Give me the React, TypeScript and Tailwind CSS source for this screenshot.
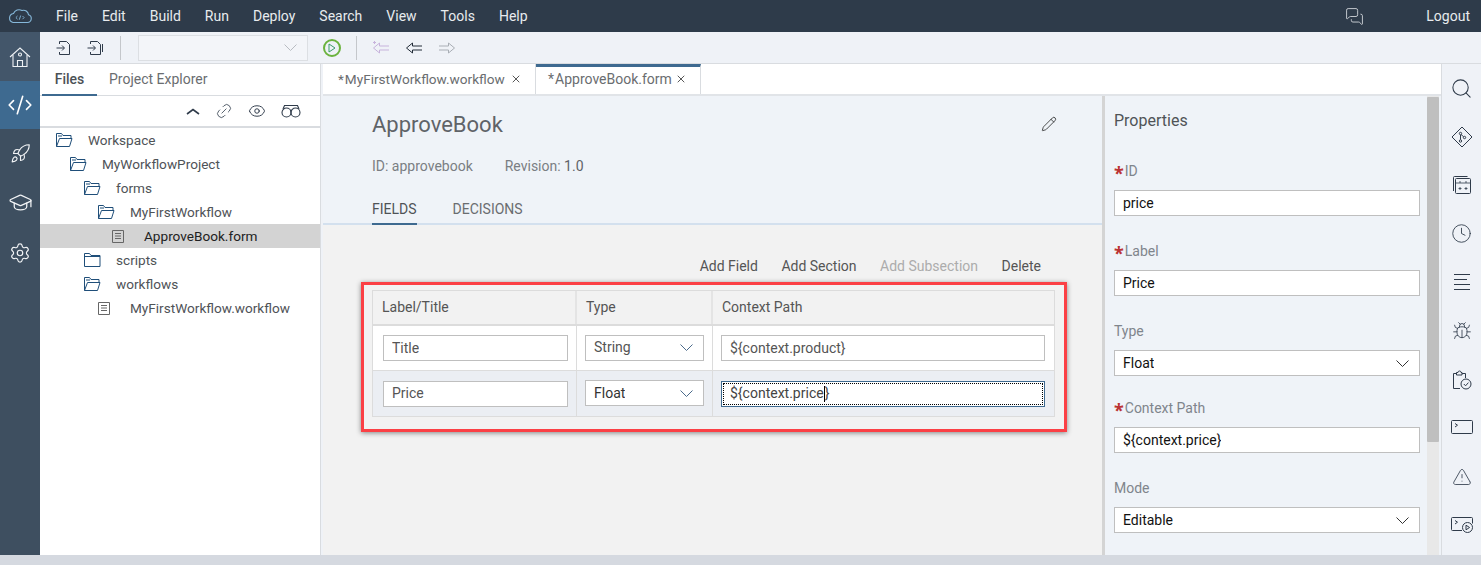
import { ReactNode } from 'react';
import {
  Bug,
  Clock,
  CodeXml,
  Eye,
  GraduationCap,
  Link2,
  MessagesSquare,
  Pencil,
  Rocket,
  Search,
  Settings,
  TriangleAlert,
  X,
} from 'lucide-react';

const menus = ['File', 'Edit', 'Build', 'Run', 'Deploy', 'Search', 'View', 'Tools', 'Help'];

const tree = [
  { name: 'Workspace', icon: 'open', pad: 'pl-[16px]' },
  { name: 'MyWorkflowProject', icon: 'open', pad: 'pl-[30px]' },
  { name: 'forms', icon: 'open', pad: 'pl-[44px]' },
  { name: 'MyFirstWorkflow', icon: 'open', pad: 'pl-[58px]' },
  { name: 'ApproveBook.form', icon: 'file', pad: 'pl-[72px]', selected: true },
  { name: 'scripts', icon: 'closed', pad: 'pl-[44px]' },
  { name: 'workflows', icon: 'open', pad: 'pl-[44px]' },
  { name: 'MyFirstWorkflow.workflow', icon: 'file', pad: 'pl-[58px]' },
];

function Logo() {
  return (
    <svg width="26" height="16" viewBox="0 0 26 16" fill="none" stroke="#86b8da" strokeWidth="1.1">
      <path d="M6 14.5h14.5a4 4 0 0 0 1-7.8A5 5 0 0 0 15 2.5 6 6 0 0 0 6.5 5.5 4.6 4.6 0 0 0 6 14.5z" />
      <path d="M10.5 8l-1.6 1.6 1.6 1.6M15.5 8l1.6 1.6-1.6 1.6M13.7 7.5l-1.4 4.2" strokeWidth="0.9" />
    </svg>
  );
}

function HomeIcon() {
  return (
    <svg width="22" height="22" viewBox="0 0 22 22" fill="none" stroke="#eef1f4" strokeWidth="1.1">
      <path d="M1 11 11 2l10 9" />
      <path d="M4 9v11.5h14V9" />
      <path d="M8.5 20.5v-6h5v6" />
      <path d="M9.5 8.5a1.5 1.5 0 1 0 3 0 1.5 1.5 0 1 0-3 0" />
    </svg>
  );
}

function FileInIcon({ double }: { double?: boolean }) {
  return (
    <svg width="17" height="16" viewBox="0 0 17 16" fill="none" stroke="#2f3b4a" strokeWidth="1">
      <path d="M3.5 4V1.5h7l3 3v10h-10V12" />
      <path d="M0.5 8h7.5M6 5.5 8.5 8 6 10.5" />
      {double && <path d="M15.5 4v8" />}
    </svg>
  );
}

function ArrowLeftIcon({ color, flip, star }: { color: string; flip?: boolean; star?: boolean }) {
  return (
    <svg width="18" height="14" viewBox="0 0 18 14" fill="none" stroke={color} strokeWidth="1" className={flip ? '-scale-x-100' : ''}>
      <path d="M17 5H7.5V2L1.5 7l6 5V9H17" />
      {star && <path d="M1 1.5h3M2.5 0v3" />}
    </svg>
  );
}

function FolderIcon({ open }: { open?: boolean }) {
  return (
    <svg width="17" height="14" viewBox="0 0 17 14" fill="none" stroke="#1f4e79" strokeWidth="1">
      {open ? (
        <>
          <path d="M0.5 13.5V0.5h5l1.5 2h8v3" />
          <path d="M0.5 13.5h13l2.5-8H3.5l-3 8z" />
          <path d="M2 3h4" />
        </>
      ) : (
        <>
          <path d="M0.5 13.5V0.5h5l1.5 2h9v11z" />
          <path d="M0.5 3.5h15.5" />
        </>
      )}
    </svg>
  );
}

function DocIcon() {
  return (
    <svg width="12" height="13" viewBox="0 0 12 13" fill="none" stroke="#666666" strokeWidth="1">
      <path d="M0.5 0.5h11v12h-11z" />
      <path d="M3 3.5h6M3 6h6M3 8.5h6" />
    </svg>
  );
}

function DiamondIcon() {
  return (
    <svg width="22" height="22" viewBox="0 0 22 22" fill="none" stroke="#2f3b4a" strokeWidth="1">
      <path d="M11 1 21 11 11 21 1 11z" />
      <circle cx="9.5" cy="7.5" r="1.2" />
      <circle cx="13.5" cy="11.5" r="1.2" />
      <circle cx="9.5" cy="15" r="1.2" />
      <path d="M9.5 9v4.6M10 8.5l2.6 2.2" />
    </svg>
  );
}

function CalendarIcon() {
  return (
    <svg width="18" height="18" viewBox="0 0 18 18" fill="none" stroke="#2f3b4a" strokeWidth="1">
      <path d="M0.5 15V1.5a1 1 0 0 1 1-1h13" />
      <rect x="2.5" y="2.5" width="15" height="15" rx="1" />
      <path d="M2.5 7h15M7 5v2M13 5v2M7 11v3M5.5 12.5h3M13 11v3M11.5 12.5h3" strokeWidth="0.8" />
    </svg>
  );
}

function LinesIcon() {
  return (
    <svg width="16" height="17" viewBox="0 0 16 17" fill="none" stroke="#2f3b4a" strokeWidth="1">
      <path d="M0 0.5h16M0 5.5h13M0 10.5h16M0 15.5h16" />
    </svg>
  );
}

function ClipboardIcon() {
  return (
    <svg width="20" height="20" viewBox="0 0 20 20" fill="none" stroke="#2f3b4a" strokeWidth="1">
      <path d="M8 18.5H1.5v-15h3M10 3.5h3.5V8" />
      <path d="M4.5 5V2.5h1.5a1.5 1.5 0 0 1 3 0H10V5z" />
      <circle cx="14" cy="14" r="5" />
      <path d="M11.8 14l1.8 1.8 2.8-3.2" />
    </svg>
  );
}

function TerminalIcon({ play }: { play?: boolean }) {
  return (
    <svg width="22" height="16" viewBox="0 0 22 16" fill="none" stroke="#2f3b4a" strokeWidth="1">
      {play ? (
        <>
          <path d="M11 13.5H1.5a1 1 0 0 1-1-1v-11a1 1 0 0 1 1-1h19a1 1 0 0 1 1 1v5" />
          <circle cx="16.5" cy="10.5" r="5" />
          <path d="M15 8.2 18.6 10.5 15 12.8z" />
        </>
      ) : (
        <rect x="0.5" y="0.5" width="21" height="13" rx="1" />
      )}
      <path d="M4 3.5 6.5 5.2 4 7" />
    </svg>
  );
}

function BinocularsIcon() {
  return (
    <svg width="20" height="14" viewBox="0 0 20 14" fill="none" stroke="#2f3b4a" strokeWidth="1.1">
      <circle cx="5.5" cy="8.5" r="4.5" />
      <circle cx="14.5" cy="8.5" r="4.5" />
      <path d="M2 5 3.5 1.5h13L18 5M10 5.5v2" />
    </svg>
  );
}

function CollapseIcon() {
  return (
    <svg width="14" height="7" viewBox="0 0 14 7" fill="none" stroke="#2f3b4a" strokeWidth="1.6">
      <path d="M1 6 7 1.5 13 6" />
    </svg>
  );
}

function SelectChevron({ color }: { color: string }) {
  return (
    <svg width="13" height="7" viewBox="0 0 13 7" fill="none" stroke={color} strokeWidth="1" className="shrink-0">
      <path d="M0.5 0.5 6.5 6.5l6-6" />
    </svg>
  );
}

function Required() {
  return <span className="text-[#bb3333] text-[18px] font-bold font-['Noto_Sans'] leading-none mr-px relative top-[2px]">*</span>;
}

function Box({ children, select, chevron, className }: { children: ReactNode; select?: boolean; chevron?: string; className: string }) {
  return (
    <div className={`flex items-center justify-between bg-white border border-[#bfbfbf] h-[26px] ${className}`}>
      <span className="truncate">{children}</span>
      {select && <SelectChevron color={chevron ?? '#333333'} />}
    </div>
  );
}

function PropField({ label, required, select, value, mt }: { label: string; required?: boolean; select?: boolean; value: string; mt: string }) {
  return (
    <div className={mt}>
      <div className="h-[20px] flex items-center text-[14px] text-[#7f858c]">
        {required && <Required />}
        {label}
      </div>
      <Box select={select} className="mt-[9px] w-[306px] pl-[8px] pr-[10px] text-[14px] text-[#111111]">
        {value}
      </Box>
    </div>
  );
}

export default function App() {
  return (
    <div className="w-[1481px] h-[565px] overflow-hidden flex flex-col bg-[#d5d9e0] text-[14px] font-['Roboto','Noto_Sans',sans-serif]">
      {/* top menu */}
      <header className="h-[32px] shrink-0 bg-[#2e3b4a] flex items-center text-[#e8ebee]">
        <div className="w-[56px] pl-[7px] flex items-center">
          <Logo />
        </div>
        <nav className="flex gap-[24px]">
          {menus.map((m) => (
            <span key={m}>{m}</span>
          ))}
        </nav>
        <MessagesSquare size={19} strokeWidth={1} className="ml-auto text-[#e8ebee]" />
        <span className="ml-[62px] mr-[11px]">Logout</span>
      </header>

      <div className="flex h-[523px] shrink-0">
        {/* left rail */}
        <aside className="w-[40px] shrink-0 bg-[#3e4f60] flex flex-col text-[#f2f4f6]">
          <div className="h-[49px] flex items-center justify-center bg-[#43566a]">
            <HomeIcon />
          </div>
          <div className="h-[48px] flex items-center justify-center bg-[#3e6a90] text-white">
            <CodeXml size={26} strokeWidth={1.5} />
          </div>
          <div className="h-[48px] flex items-center justify-center">
            <Rocket size={21} strokeWidth={1.3} />
          </div>
          <div className="h-[50px] flex items-center justify-center">
            <GraduationCap size={25} strokeWidth={1.2} />
          </div>
          <div className="h-[51px] flex items-center justify-center">
            <Settings size={22} strokeWidth={1.3} />
          </div>
        </aside>

        <div className="flex-1 flex flex-col min-w-0">
          {/* toolbar */}
          <div className="h-[32px] shrink-0 bg-[#eff2f7] border-b border-[#d9dce0] flex items-center">
            <div className="ml-[16px] flex gap-[14px]">
              <FileInIcon />
              <FileInIcon double />
            </div>
            <div className="ml-[16px] w-px h-[24px] bg-[#c4c7cb]" />
            <div className="ml-[17px] w-[170px] h-[26px] border border-[#dcdfe3] bg-[#f3f5f9] flex items-center justify-end pr-[10px]">
              <SelectChevron color="#b8bcc2" />
            </div>
            <div className="ml-[15px] w-[18px] h-[18px] rounded-full border-2 border-[#6bb33e] flex items-center justify-center">
              <svg width="8" height="10" viewBox="0 0 8 10" fill="none" stroke="#3a9a6a" strokeWidth="1">
                <path d="M1 1 7 5 1 9z" />
              </svg>
            </div>
            <div className="ml-[15px] w-px h-[24px] bg-[#c4c7cb]" />
            <div className="ml-[15px] flex gap-[15px]">
              <ArrowLeftIcon color="#c7b3dc" star />
              <ArrowLeftIcon color="#222c38" />
              <ArrowLeftIcon color="#a9aeb5" flip />
            </div>
          </div>

          <div className="flex flex-1 min-h-0">
            {/* file tree */}
            <section className="w-[281px] shrink-0 bg-white border-r border-[#d9dce0]">
              <div className="h-[32px] flex items-end border-b border-[#d9dce0]">
                <div className="ml-[2px] w-[55px] h-[32px] flex items-center justify-center font-medium text-[#4c5156] border-b-2 border-[#3e6a90] -mb-px">
                  Files
                </div>
                <div className="ml-[12px] h-[32px] flex items-center text-[#6a6d70]">Project Explorer</div>
              </div>
              <div className="h-[32px] flex items-center justify-end gap-[15px] pr-[19px] border-b-2 border-[#d9dce0] text-[#2f3b4a]">
                <CollapseIcon />
                <Link2 size={18} strokeWidth={1} className="-rotate-45" />
                <Eye size={18} strokeWidth={1.3} />
                <BinocularsIcon />
              </div>
              {tree.map((n) => (
                <div key={n.name} className={`h-[24px] flex items-center text-[13.6px] ${n.pad} ${n.selected ? 'bg-[#d3d3d3] text-[#222222]' : 'text-[#4f5357]'}`}>
                  <span className="w-[32px] shrink-0 flex items-center">
                    {n.icon === 'open' && <FolderIcon open />}
                    {n.icon === 'closed' && <FolderIcon />}
                    {n.icon === 'file' && <DocIcon />}
                  </span>
                  {n.name}
                </div>
              ))}
            </section>

            <div className="w-[2px] shrink-0 bg-[#eff2f7]" />

            <div className="w-[1118px] shrink-0 flex flex-col">
              {/* open file tabs */}
              <div className="h-[32px] shrink-0 bg-white border-b-2 border-[#e1e4e8] flex text-[#6a6d70]">
                <div className="w-[213px] border-r border-[#d9dce0] flex items-center pl-[15px] text-[13.6px]">
                  <span className="mr-[1px]">*</span>MyFirstWorkflow.workflow
                  <X size={12} strokeWidth={1.8} className="ml-[5px] text-[#444444]" />
                </div>
                <div className="w-[165px] border-r border-[#d9dce0] border-t-[3px] border-t-[#3e6a90] flex items-center pl-[12px] pb-[3px]">
                  <span className="mr-[1px]">*</span>ApproveBook.form
                  <X size={12} strokeWidth={1.8} className="ml-[3px] text-[#444444]" />
                </div>
              </div>

              <div className="flex flex-1 min-h-0">
                {/* editor */}
                <main className="w-[779px] shrink-0 flex flex-col bg-[#f2f2f2]">
                  <div className="h-[129px] shrink-0 bg-[#eff3f8] border-b-2 border-[#d3e0ee] pl-[49px] pr-[45px]">
                    <div className="flex items-center justify-between pt-[13px]">
                      <h1 className="text-[22px] leading-[32px] text-[#5f6368]">ApproveBook</h1>
                      <Pencil size={16} strokeWidth={1.1} className="text-[#111111] -mt-[2px]" />
                    </div>
                    <div className="mt-[15px] flex gap-[32px] text-[#7a7e83] leading-[20px]">
                      <span>ID: approvebook</span>
                      <span>
                        Revision: <span className="text-[#5f6368]">1.0</span>
                      </span>
                    </div>
                    <div className="mt-[22px] flex gap-[36px] text-[#6a6d70]">
                      <div className="h-[27px] pt-[1px] border-b-2 border-[#3e6a90] text-[#4f5357]">FIELDS</div>
                      <div className="pt-[1px]">DECISIONS</div>
                    </div>
                  </div>

                  <div className="flex justify-end gap-[23.5px] pr-[61px] mt-[31px] leading-[20px] text-[#555555]">
                    <span>Add Field</span>
                    <span>Add Section</span>
                    <span className="text-[#acacac]">Add Subsection</span>
                    <span>Delete</span>
                  </div>

                  {/* fields table, red box is a callout drawn around it */}
                  <div className="ml-[38px] mt-[6px] w-[706px] h-[150px] border-[3px] border-[#fb4045] shadow-[0_1px_5px_rgba(0,0,0,0.45)] pt-[5px] pl-[8px] text-[#555555]">
                    <div className="w-[683px] border border-[#dcdcdc]">
                      <div className="flex h-[35px] border-b-2 border-[#dcdcdc]">
                        <div className="w-[204px] border-r-2 border-[#e4e4e4] pl-[9px] flex items-center">Label/Title</div>
                        <div className="w-[136px] border-r-2 border-[#e4e4e4] pl-[9px] flex items-center">Type</div>
                        <div className="flex-1 pl-[9px] flex items-center">Context Path</div>
                      </div>
                      <div className="flex h-[45px] bg-white border-b border-[#dcdcdc]">
                        <div className="w-[204px] border-r border-[#dcdcdc] pl-[10px] flex items-center">
                          <Box className="w-[185px] pl-[8px]">Title</Box>
                        </div>
                        <div className="w-[136px] border-r border-[#dcdcdc] pl-[8px] flex items-center">
                          <Box select chevron="#4a6a8a" className="w-[119px] pl-[8px] pr-[10px] -mt-[1px]">String</Box>
                        </div>
                        <div className="flex-1 pl-[8px] flex items-center">
                          <Box className="w-[324px] pl-[8px]">{'${context.product}'}</Box>
                        </div>
                      </div>
                      <div className="flex h-[45px] bg-[#ebeef3]">
                        <div className="w-[204px] border-r border-[#dcdcdc] pl-[10px] flex items-center">
                          <Box className="w-[185px] pl-[8px]">Price</Box>
                        </div>
                        <div className="w-[136px] border-r border-[#dcdcdc] pl-[8px] flex items-center">
                          <Box select chevron="#4a6a8a" className="w-[119px] pl-[8px] pr-[10px] -mt-[1px] text-[#333333]">Float</Box>
                        </div>
                        <div className="flex-1 pl-[8px] flex items-center">
                          <div className="w-[324px] h-[26px] bg-white border border-[#3e6a90] p-px">
                            <div className="h-full border border-dotted border-black pl-[6px] flex items-center text-[#444444]">
                              {'${context.price'}
                              <span className="inline-block w-px h-[16px] bg-black" />
                              {'}'}
                            </div>
                          </div>
                        </div>
                      </div>
                    </div>
                  </div>
                </main>

                <div className="w-[3px] shrink-0 bg-[#d4d4d4]" />

                {/* properties */}
                <section className="w-[336px] shrink-0 bg-[#eff3f8] flex">
                  <div className="flex-1 pl-[9px] pt-[14px]">
                    <div className="text-[16px] leading-[22px] text-[#4f5357]">Properties</div>
                    <PropField label="ID" required value="price" mt="mt-[29px]" />
                    <PropField label="Label" required value="Price" mt="mt-[25px]" />
                    <PropField label="Type" select value="Float" mt="mt-[25px]" />
                    <PropField label="Context Path" required value="${context.price}" mt="mt-[22px]" />
                    <PropField label="Mode" select value="Editable" mt="mt-[25px]" />
                  </div>
                  <div className="w-[12px] mr-[2px] bg-[#e8e8e8] pt-px">
                    <div className="h-[345px] bg-[#bfbfbf] rounded-[1px]" />
                  </div>
                </section>
              </div>
            </div>

            {/* right rail */}
            <aside className="w-[40px] shrink-0 bg-[#eff2f7] border-l border-[#d9dce0] flex flex-col items-center pt-[14px] gap-[28.6px] text-[#2f3b4a]">
              <div className="h-5 flex items-center"><Search size={23} strokeWidth={1.1} /></div>
              <div className="h-5 flex items-center"><DiamondIcon /></div>
              <div className="h-5 flex items-center"><CalendarIcon /></div>
              <div className="h-5 flex items-center"><Clock size={21} strokeWidth={1} /></div>
              <div className="h-5 flex items-center"><LinesIcon /></div>
              <div className="h-5 flex items-center"><Bug size={20} strokeWidth={1} /></div>
              <div className="h-5 flex items-center"><ClipboardIcon /></div>
              <div className="h-5 flex items-center"><TerminalIcon /></div>
              <div className="h-5 flex items-center"><TriangleAlert size={20} strokeWidth={1} /></div>
              <div className="h-5 flex items-center"><TerminalIcon play /></div>
            </aside>
          </div>
        </div>
      </div>
    </div>
  );
}
